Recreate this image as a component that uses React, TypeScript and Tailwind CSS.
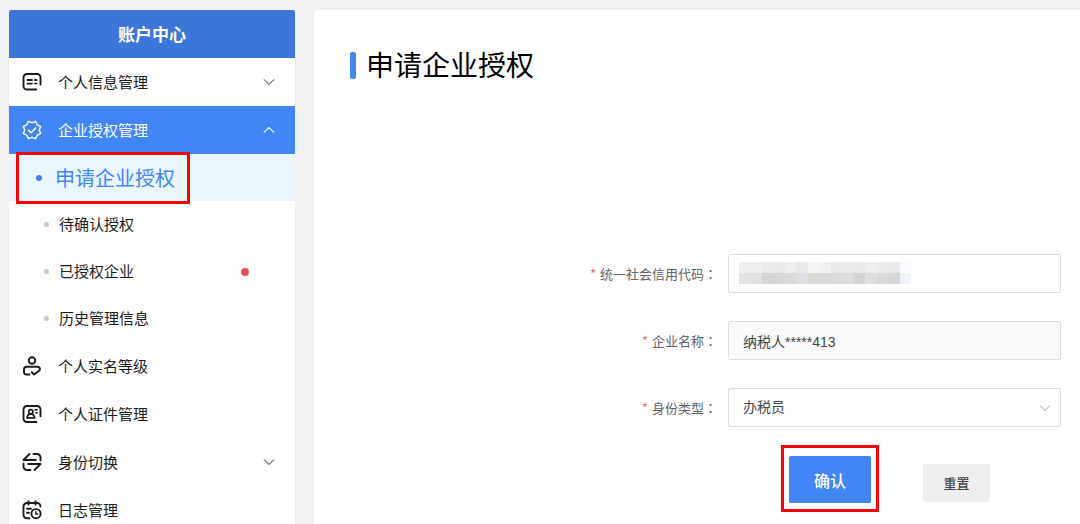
import type { ReactNode } from "react";

function Icon({ children }: { children: ReactNode }) {
  return (
    <svg
      viewBox="0 0 20 20"
      className="size-5 shrink-0"
      fill="none"
      stroke="currentColor"
      strokeWidth="1.9"
      strokeLinecap="round"
      strokeLinejoin="round"
      aria-hidden="true"
    >
      {children}
    </svg>
  );
}

const ProfileIcon = () => (
  <Icon>
    <path d="M14.2 17.5H5A3.500 3.500 0 0 1 1.500 14V5.500A3.500 3.500 0 0 1 5 2h10a3.500 3.500 0 0 1 3.500 3.500v7" />
    <path d="M5.500 8h4.500M5.500 11.600h4.500M13 8h1.600M13 11.600h1.600" strokeWidth="1.800" />
  </Icon>
);

const BadgeIcon = () => (
  <Icon>
    <path
      d="M10 2.700L13.600 1.400 15.200 4.800 18.600 6.400 17.300 10 18.600 13.600 15.200 15.200 13.600 18.600 10 17.300 6.400 18.600 4.800 15.200 1.400 13.600 2.700 10 1.400 6.400 4.800 4.800 6.400 1.400z"
      strokeWidth="1.400"
    />
    <path d="M6.600 10.200l2.600 2.500 4.400-4.800" strokeWidth="1.500" />
  </Icon>
);

const LevelIcon = () => (
  <Icon>
    <circle cx="10" cy="4.500" r="3.200" />
    <path d="M7.600 18.500H4.500A2.500 2.500 0 0 1 2 16V13.500A2.800 2.800 0 0 1 4.800 10.700h10.400a2.800 2.800 0 0 1 2.800 2.300" />
    <path d="M9.800 16.200l2.400 2.300 5.400-4.300" />
  </Icon>
);

const CardIcon = () => (
  <Icon>
    <path d="M14.500 18H5A3.500 3.500 0 0 1 1.500 14.500v-9A3.500 3.500 0 0 1 5 2h10a3.500 3.500 0 0 1 3.500 3.500v6.800" />
    <circle cx="8.800" cy="7.800" r="2.100" strokeWidth="1.700" />
    <path d="M5 13.800h7.600c-.2-2-1.400-3.300-2.600-3.600H7.600c-1.300.3-2.400 1.600-2.600 3.600z" strokeWidth="1.700" />
    <path d="M13 5.800h2.200M14 8.800h1.200" strokeWidth="1.500" />
  </Icon>
);

const SwitchIcon = () => (
  <Icon>
    <path d="M7.500 2L1.500 8h12.300M12.500 18l6-6H6.200" />
    <path d="M11.500 2h3.500a3.500 3.500 0 0 1 3.500 3.500v3M8.500 18H5a3.500 3.500 0 0 1-3.500-3.500v-3" />
  </Icon>
);

const LogIcon = () => (
  <Icon>
    <path d="M7.500 18.300H5A3.500 3.500 0 0 1 1.500 14.800V6.500A3.500 3.500 0 0 1 5 3h10a3.500 3.500 0 0 1 3.500 3.500" />
    <path d="M6.500 1.300v3.200M13.500 1.300v3.200M5 8.800h4M5 12.800h2" />
    <circle cx="14" cy="13.700" r="4.600" />
    <path d="M13.800 11.700v2.300h1.800" strokeWidth="1.400" />
  </Icon>
);

function Chevron({ up = false, className = "" }: { up?: boolean; className?: string }) {
  return (
    <svg
      viewBox="0 0 12 8"
      className={`h-2 w-3 shrink-0 ${className}`}
      fill="none"
      stroke="currentColor"
      strokeWidth="1.100"
      aria-hidden="true"
    >
      <path d={up ? "M.8 6.600L6 1.600l5.200 5" : "M.8 1.400L6 6.400l5.200-5"} />
    </svg>
  );
}

interface ItemProps {
  icon: ReactNode;
  label: string;
  chevron?: "up" | "down";
  active?: boolean;
}

function MenuItem({ icon, label, chevron, active = false }: ItemProps) {
  return (
    <button
      type="button"
      aria-expanded={chevron ? chevron === "up" : undefined}
      className={`flex h-12 w-full items-center pr-5 pl-[13px] text-[15px] ${
        active ? "bg-[#4285f5] text-white" : "text-[#1a1a1a]"
      }`}
    >
      {icon}
      <span className="ml-4 flex-1 text-left">{label}</span>
      {chevron && (
        <Chevron up={chevron === "up"} className={active ? "text-white" : "text-[#777777]"} />
      )}
    </button>
  );
}

function SubItem({ label, alert = false }: { label: string; alert?: boolean }) {
  return (
    <li>
      <a href="#" className="flex h-[47px] items-center pr-[46px] pl-[35px] text-[15px] text-[#1a1a1a]">
        <span className="size-[5px] rounded-full bg-[#c8c8c8]" />
        <span className="ml-[10px] flex-1">{label}</span>
        {alert && <span className="size-2 rounded-full bg-[#f05050]" />}
      </a>
    </li>
  );
}

function Label({ htmlFor, children }: { htmlFor: string; children: ReactNode }) {
  return (
    <label htmlFor={htmlFor} className="flex-1 text-right text-[13px] text-[#606266]">
      <span className="mr-1 text-[#f56c6c]">*</span>
      {children}
      <span lang="zh-TW" className="font-['Noto_Sans_CJK_TC',sans-serif]">：</span>
    </label>
  );
}

const mosaic = [
  "bg-[#eeeeee]", "bg-[#eeeeee]", "bg-[#eaeaea]", "bg-[#e9e9e9]", "bg-[#eeeeee]", "bg-[#e8e8e8]", "bg-[#f2f5f4]",
  "bg-[#f1f1f0]", "bg-[#e8e8e8]", "bg-[#e9eaea]", "bg-[#e7e8e7]", "bg-[#eeedeb]", "bg-[#ebebeb]", "bg-[#e8e8e6]", "bg-[#fafbff]",
  "bg-[#e3e3e3]", "bg-[#e2e2e2]", "bg-[#d6d6d6]", "bg-[#d7d7d7]", "bg-[#dadada]", "bg-[#dde0e3]", "bg-[#dcdad5]",
  "bg-[#d8dbda]", "bg-[#dadcdc]", "bg-[#dcdddd]", "bg-[#d4d4d2]", "bg-[#dfdfdf]", "bg-[#dadada]", "bg-[#d7d7d7]", "bg-[#f1f3fa]",
];

const fieldBox =
  "h-[39px] w-full rounded-xs border border-[#dcdcdc] px-[14px] font-['Liberation_Sans','Noto_Sans_CJK_SC',sans-serif] text-[14px] text-[#444444]";

export default function App() {
  return (
    <div className="flex min-h-screen items-stretch gap-[19px] bg-[#f1f1f4] pt-[10px] pl-[9px] font-['Noto_Sans_CJK_SC',sans-serif]">
      <aside className="w-[286px] shrink-0 rounded-t-xs bg-white">
        <h2 className="flex h-12 items-center justify-center rounded-t-xs bg-[#3d76d9] text-[17px] font-bold text-white">
          账户中心
        </h2>
        <nav>
          <MenuItem icon={<ProfileIcon />} label="个人信息管理" chevron="down" />
          <MenuItem icon={<BadgeIcon />} label="企业授权管理" chevron="up" active />
          <ul>
            <li className="relative">
              <a
                href="#"
                aria-current="page"
                className="flex h-[47px] items-center bg-[#eaf6fd] pl-[27px] text-[20px] text-[#4285f5]"
              >
                <span className="size-[6px] rounded-full bg-[#4285f5]" />
                <span className="ml-[13px]">申请企业授权</span>
              </a>
              <span className="pointer-events-none absolute -top-0.5 left-[7px] h-[52px] w-[174px] border-3 border-[#fb0007]" />
            </li>
            <SubItem label="待确认授权" />
            <SubItem label="已授权企业" alert />
            <SubItem label="历史管理信息" />
          </ul>
          <MenuItem icon={<LevelIcon />} label="个人实名等级" />
          <MenuItem icon={<CardIcon />} label="个人证件管理" />
          <MenuItem icon={<SwitchIcon />} label="身份切换" chevron="down" />
          <div className="-mb-5">
            <MenuItem icon={<LogIcon />} label="日志管理" />
          </div>
        </nav>
      </aside>

      <main className="min-w-0 flex-1 rounded-tl-xs bg-white pr-[19px] pl-9">
        <h1 className="flex items-center gap-[10px] pt-[34px] text-[28px] leading-10 text-black">
          <span className="mt-[3px] h-[27px] w-[6px] rounded-xs bg-[#4285f5]" />
          申请企业授权
        </h1>

        <form className="mt-[170px]" onSubmit={(e) => e.preventDefault()}>
          <div className="flex flex-col gap-7">
            <div className="flex items-center gap-[11px]">
              <Label htmlFor="code">统一社会信用代码</Label>
              <div className="relative w-[333px]">
                <input id="code" type="text" className={fieldBox} />
                <div className="pointer-events-none absolute top-2 left-[11px] grid w-[172px] grid-cols-15">
                  {mosaic.map((tone, i) => (
                    <span key={i} className={`h-[11px] ${tone}`} />
                  ))}
                </div>
              </div>
            </div>
            <div className="flex items-center gap-[11px]">
              <Label htmlFor="name">企业名称</Label>
              <div className="w-[333px]">
                <input id="name" type="text" readOnly value="纳税人*****413" className={`${fieldBox} bg-[#fafafa]`} />
              </div>
            </div>
            <div className="flex items-center gap-[11px]">
              <Label htmlFor="role">身份类型</Label>
              <div className="relative w-[333px]">
                <select id="role" className={`${fieldBox} appearance-none bg-white`}>
                  <option>办税员</option>
                </select>
                <Chevron className="pointer-events-none absolute top-4 right-[10px] text-[#c0c4cc]" />
              </div>
            </div>
          </div>
          <div className="mt-[18px] flex justify-end pr-[71px]">
            <div className="mr-11 border-3 border-[#fb0007] px-[5px] pt-2 pb-[6px]">
              <button type="submit" className="h-[47px] w-[82px] rounded-xs bg-[#4285f5] text-[16px] font-medium text-white">
                确认
              </button>
            </div>
            <button type="reset" className="mt-[19px] h-[38px] w-[67px] rounded-xs bg-[#eeeeee] text-[13px] font-medium text-[#444444]">
              重置
            </button>
          </div>
        </form>
      </main>
    </div>
  );
}
